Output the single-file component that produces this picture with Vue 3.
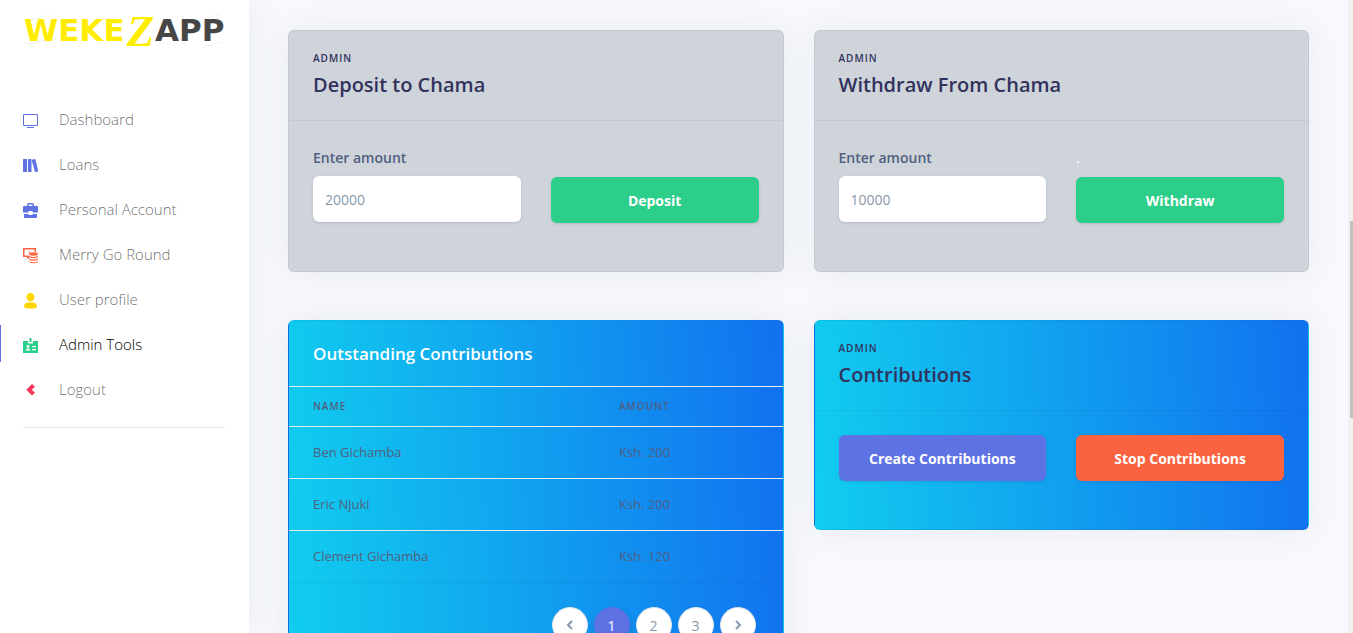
<script setup>
import { ref } from 'vue'

const navItems = [
  { icon: 'tv', label: 'Dashboard', color: '#5e72e4' },
  { icon: 'books', label: 'Loans', color: '#5e72e4' },
  { icon: 'briefcase', label: 'Personal Account', color: '#5e72e4' },
  { icon: 'coins', label: 'Merry Go Round', color: '#fb6340' },
  { icon: 'user', label: 'User profile', color: '#ffd600' },
  { icon: 'badge', label: 'Admin Tools', color: '#2dce89', active: true },
  { icon: 'left', label: 'Logout', color: '#f5365c' }
]

const members = [
  { name: 'Ben Gichamba', amount: 'Ksh. 200' },
  { name: 'Eric Njuki', amount: 'Ksh. 200' },
  { name: 'Clement Gichamba', amount: 'Ksh. 120' }
]

const deposit = ref('')
const withdraw = ref('')
</script>

<template>
  <div class="layout">
    <nav class="sidebar">
      <a class="brand" href="#" aria-label="Wekezapp">
        <svg width="206" height="70" viewBox="0 0 206 70">
          <path d="M4 21 26 15M4 44 34 38M72 21l20-4M180 19l18-5M178 48l20-6" stroke="#f2f2f2" fill="none" />
          <text class="mark yellow" x="1" y="41">WEKE</text>
          <text class="mark-z yellow" x="104" y="46">Z</text>
          <text class="mark dark" x="132" y="41">APP</text>
        </svg>
      </a>
      <ul class="nav">
        <li v-for="item in navItems" :key="item.label">
          <a href="#" class="nav-link" :class="{ active: item.active }">
            <svg class="nav-icon" width="16" height="16" viewBox="0 0 16 16" :style="{ color: item.color }" fill="currentColor">
              <path v-if="item.icon === 'tv'" fill-rule="evenodd" d="M1 1h13a1 1 0 0 1 1 1v10a1 1 0 0 1-1 1H1a1 1 0 0 1-1-1V2a1 1 0 0 1 1-1zm0 1v10h13V2zM4 14h7v1H4z" />
              <path v-else-if="item.icon === 'books'" d="M.5 1h3a.5.5 0 0 1 .5.5v12a.5.5 0 0 1-.5.5h-3a.5.5 0 0 1-.5-.5v-12A.5.5 0 0 1 .5 1zM5.5 1H8a.5.5 0 0 1 .5.5v12a.5.5 0 0 1-.5.5H5.5a.5.5 0 0 1-.5-.5v-12a.5.5 0 0 1 .5-.5zM9 1.800l2.800-.8a.5.5 0 0 1 .6.300l2.800 11.700a.5.5 0 0 1-.4.600l-2.200.5a.5.5 0 0 1-.6-.4L9 3.500z" />
              <path v-else-if="item.icon === 'briefcase'" fill-rule="evenodd" d="M4 3V1.500L5 0h5l1 1.500V3h3a1 1 0 0 1 1 1v5.500H9.500V8h-4v1.500H0V4a1 1 0 0 1 1-1zM5.500 3h4V1.500h-4zM1 11h4.500v1h4v-1H14v3a1 1 0 0 1-1 1H2a1 1 0 0 1-1-1z" />
              <g v-else-if="item.icon === 'coins'">
                <path d="M0 0h13v4h-1.500V1.500h-10v6H6V9H0zM5.500 3.500h2v1h-2zM4 9v1.500h2V9z" />
                <ellipse cx="10.500" cy="6" rx="4.500" ry="1.700" />
                <path d="M6 8q4.500 2 9 0v1q-4.500 2.500-9 0zM6 10.600q4.500 2 9 0v1q-4.500 2.500-9 0zM6 13.200q4.500 2 9 0v.8q-4.500 2.500-9 0z" />
              </g>
              <path v-else-if="item.icon === 'user'" d="M7.500 0c2.500 0 4 1.800 4 4S10 8.500 7.500 8.500 3.500 6.200 3.500 4s1.500-4 4-4zM5 9.500h5c2.500 0 4 2 4 4 0 1.500-3 2-6.500 2S1 15 1 13.500c0-2 1.500-4 4-4z" />
              <path v-else-if="item.icon === 'badge'" fill-rule="evenodd" d="M6.500 0h2v4h-2zM0 3h5v2.500h5V3h5v12H0zM5 7a1.500 1.500 0 1 0 0 3 1.500 1.500 0 0 0 0-3zM2.500 12.500h5Q7.200 10.500 5 10.500t-2.500 2zM9 8v1.200h4V8zM9 11v1.200h4V11z" />
              <path v-else d="M9 1l3 2.800-3.300 3 3.300 3L9 12.600 3.300 6.800z" />
            </svg>
            <span>{{ item.label }}</span>
          </a>
        </li>
      </ul>
      <hr class="divider" />
    </nav>

    <main class="content">
      <section class="card grey">
        <header class="card-header">
          <h6 class="overline">Admin</h6>
          <h2 class="title">Deposit to Chama</h2>
        </header>
        <form class="card-body two-col" @submit.prevent>
          <div class="field">
            <label for="deposit-amount">Enter amount</label>
            <input id="deposit-amount" v-model="deposit" type="text" placeholder="20000" />
          </div>
          <div class="field">
            <span class="spacer"></span>
            <button class="btn green" type="submit">Deposit</button>
          </div>
        </form>
      </section>

      <section class="card grey">
        <header class="card-header">
          <h6 class="overline">Admin</h6>
          <h2 class="title">Withdraw From Chama</h2>
        </header>
        <form class="card-body two-col" @submit.prevent>
          <div class="field">
            <label for="withdraw-amount">Enter amount</label>
            <input id="withdraw-amount" v-model="withdraw" type="text" placeholder="10000" />
          </div>
          <div class="field">
            <span class="spacer">.</span>
            <button class="btn green" type="submit">Withdraw</button>
          </div>
        </form>
      </section>

      <section class="card blue">
        <h3 class="table-title">Outstanding Contributions</h3>
        <table>
          <thead>
            <tr><th class="name-col">Name</th><th>Amount</th></tr>
          </thead>
          <tbody>
            <tr v-for="m in members" :key="m.name">
              <td>{{ m.name }}</td><td>{{ m.amount }}</td>
            </tr>
          </tbody>
        </table>
        <footer class="card-footer">
          <a class="page" href="#" aria-label="Previous"><svg width="8" height="10" viewBox="0 0 8 10"><path d="M6 1 2 5l4 4" /></svg></a>
          <a class="page current" href="#">1</a>
          <a class="page" href="#">2</a>
          <a class="page" href="#">3</a>
          <a class="page" href="#" aria-label="Next"><svg width="8" height="10" viewBox="0 0 8 10"><path d="m2 1 4 4-4 4" /></svg></a>
        </footer>
      </section>

      <section class="card blue">
        <header class="card-header">
          <h6 class="overline">Admin</h6>
          <h2 class="title">Contributions</h2>
        </header>
        <div class="card-body two-col">
          <button class="btn indigo" type="button">Create Contributions</button>
          <button class="btn orange" type="button">Stop Contributions</button>
        </div>
      </section>
    </main>

    <div class="scroll-track"><div class="scroll-thumb"></div></div>
  </div>
</template>

<style>
html, body { overflow: hidden; background: #f8f9fe; }
</style>

<style scoped>
.layout {
  display: flex;
  height: 100vh;
  overflow: hidden;
  font-family: "Open Sans", sans-serif;
  color: #525f7f;
}
.layout *, .layout { box-sizing: border-box; }
.sidebar {
  flex: 0 0 249px;
  background: #fff;
  box-shadow: 0 0 32px rgba(136, 152, 170, .15);
}
.brand { display: block; height: 100px; padding: 0 20px 0 23px; }
.brand svg { display: block; }
.mark { font: bold 31px "DejaVu Sans", sans-serif; }
.mark-z { font: italic bold 45px "Liberation Serif", serif; }
.yellow { fill: #ffed00; }
.dark { fill: #464646; }
.nav { list-style: none; margin: 0; padding: 0; }
.nav li { height: 45px; }
.nav-link {
  display: flex;
  align-items: center;
  gap: 20px;
  height: 37px;
  padding: 4px 22px 0;
  border-left: 1px solid transparent;
  color: rgba(0, 0, 0, .6);
  font-size: 15px;
  font-weight: 300;
  line-height: 24px;
  text-decoration: none;
}
.nav-link span { padding-bottom: 4px; }
.nav-link.active { color: #000; border-left-color: #5e72e4; }
.divider { margin: 12px 24px 0 23px; border: 0; border-top: 1px solid rgba(0, 0, 0, .1); }

.content {
  flex: 1;
  display: grid;
  grid-template-columns: 1fr 1fr;
  align-items: start;
  align-content: start;
  column-gap: 30px;
  row-gap: 48px;
  padding: 30px 39px 0;
}
.card {
  border: 1px solid rgba(0, 0, 0, .05);
  border-radius: 6px;
  box-shadow: 0 0 32px rgba(136, 152, 170, .15);
}
.grey { background: #ced4da; }
.blue { background: linear-gradient(87deg, #11cdef 0, #1171ef 100%); }
.card-header {
  height: 90px;
  padding: 20px 24px;
  border-bottom: 1px solid rgba(0, 0, 0, .05);
  color: #32325d;
}
.overline {
  margin: 0 0 6px;
  font-size: 10px;
  font-weight: 600;
  line-height: 14px;
  letter-spacing: 1px;
  text-transform: uppercase;
}
.title { margin: 0; font-size: 20px; font-weight: 600; line-height: 28px; }
.card-body { padding: 24px 24px 48px; }
.two-col { display: grid; grid-template-columns: 1fr 1fr; column-gap: 30px; }
.field { display: flex; flex-direction: column; }
.field label { margin-bottom: 6px; font-size: 14px; font-weight: 600; line-height: 25px; }
.spacer { height: 32px; color: #fff; font-size: 14px; font-weight: 600; line-height: 26px; }
input {
  width: 100%;
  height: 46px;
  padding: 0 12px;
  border: 0;
  border-radius: 6px;
  background: #fff;
  box-shadow: 0 1px 3px rgba(50, 50, 93, .15), 0 1px 0 rgba(0, 0, 0, .02);
  color: #8898aa;
  font: 400 14px "Open Sans", sans-serif;
}
input::placeholder { color: #8898aa; opacity: 1; }
.btn {
  height: 46px;
  border: 0;
  border-radius: 6px;
  box-shadow: 0 1px 3px rgba(50, 50, 93, .15);
  color: #fff;
  font: 700 14px "Open Sans", sans-serif;
}
.green { background: #2dce89; }
.indigo { background: #5e72e4; }
.orange { background: #fb6340; }

.table-title { margin: 0; padding: 20px 24px; color: #fff; font-size: 17px; font-weight: 600; line-height: 25px; }
table { width: 100%; border-collapse: separate; border-spacing: 0; table-layout: fixed; }
th, td { padding: 0 24px 2px; text-align: left; border-top: 1px solid #e9ecef; }
th {
  height: 40px;
  font-size: 10px;
  font-weight: 600;
  letter-spacing: 1px;
  text-transform: uppercase;
}
td { height: 52px; font-size: 13px; }
.name-col { width: 62%; }
.card-footer {
  display: flex;
  justify-content: flex-end;
  gap: 6px;
  padding: 24px 27px;
  border-top: 1px solid rgba(0, 0, 0, .05);
}
.page {
  display: flex;
  align-items: center;
  justify-content: center;
  width: 36px;
  height: 36px;
  border: 1px solid #dee2e6;
  border-radius: 50%;
  background: #fff;
  color: #8898aa;
  font-size: 14px;
  text-decoration: none;
}
.page path { fill: none; stroke: #8898aa; stroke-width: 2; }
.page.current {
  background: #5e72e4;
  border-color: #5e72e4;
  color: #fff;
  box-shadow: 0 7px 14px rgba(50, 50, 93, .1), 0 3px 6px rgba(0, 0, 0, .08);
}
.scroll-track { flex: 0 0 5px; padding: 221px 0 0 2px; background: #f1f1f1; }
.scroll-thumb { height: 197px; background: #c1c1c1; }
</style>
